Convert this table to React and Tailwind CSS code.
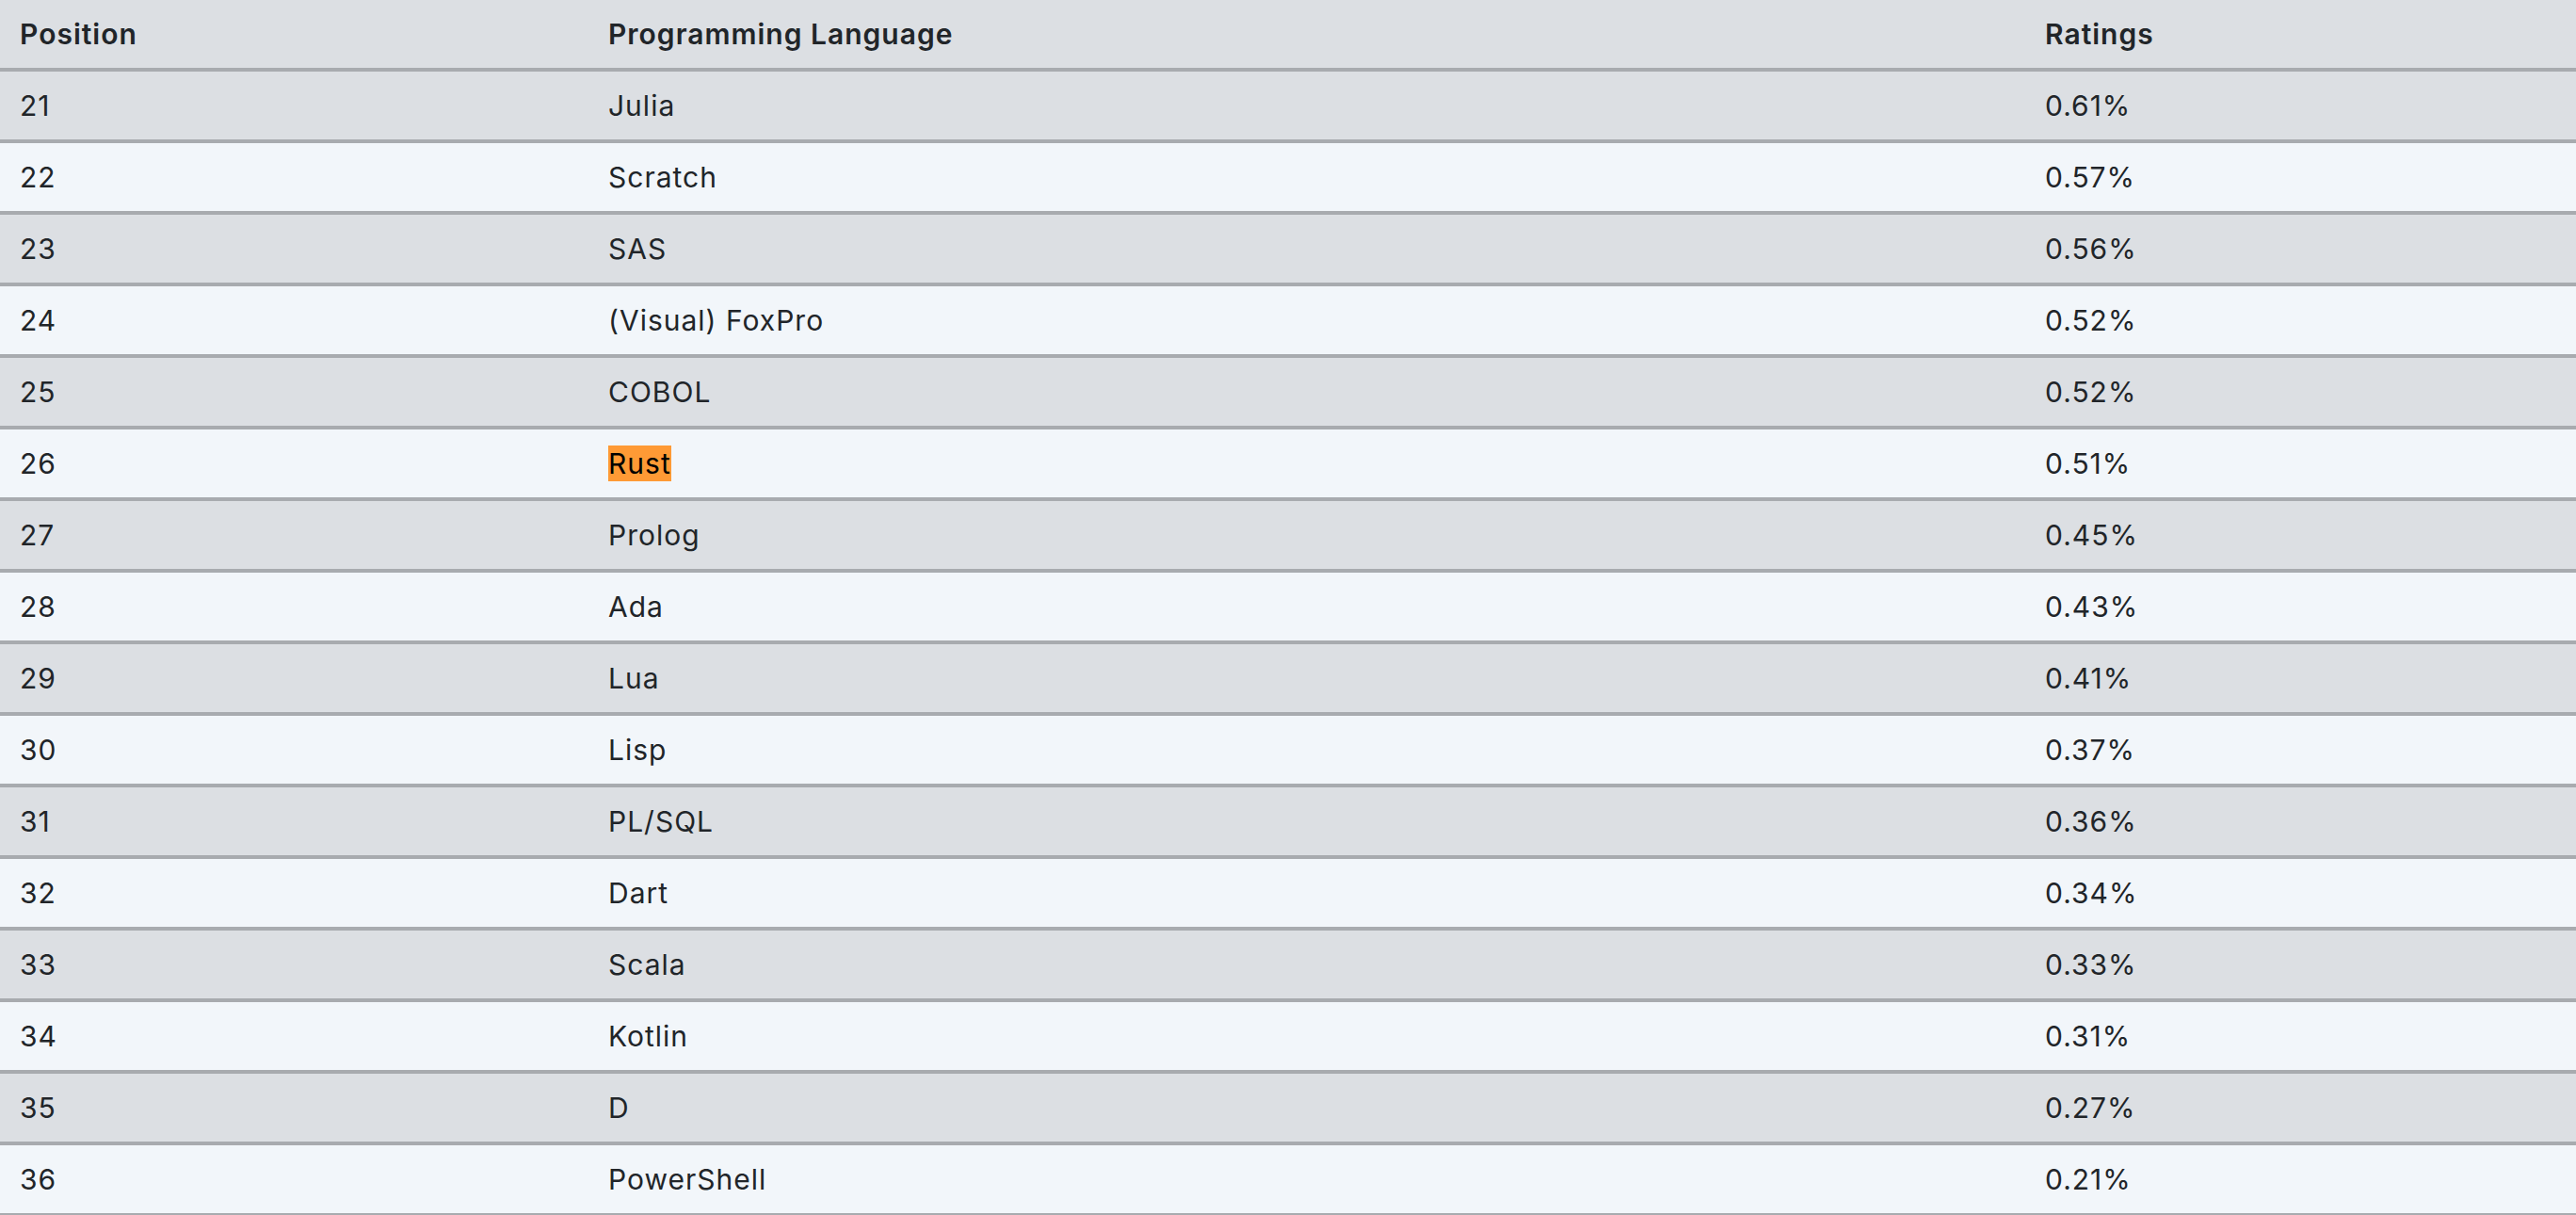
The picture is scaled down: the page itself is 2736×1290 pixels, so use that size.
const rows = [
  ["21", "Julia", "0.61%"],
  ["22", "Scratch", "0.57%"],
  ["23", "SAS", "0.56%"],
  ["24", "(Visual) FoxPro", "0.52%"],
  ["25", "COBOL", "0.52%"],
  ["26", "Rust", "0.51%"],
  ["27", "Prolog", "0.45%"],
  ["28", "Ada", "0.43%"],
  ["29", "Lua", "0.41%"],
  ["30", "Lisp", "0.37%"],
  ["31", "PL/SQL", "0.36%"],
  ["32", "Dart", "0.34%"],
  ["33", "Scala", "0.33%"],
  ["34", "Kotlin", "0.31%"],
  ["35", "D", "0.27%"],
  ["36", "PowerShell", "0.21%"],
];

const App = () => {
  return (
    <div
      className="w-[2736px] h-[1290px] overflow-hidden bg-[#f2f6fa] text-[#212529] text-[30px]"
      style={{ fontFamily: '"Inter", sans-serif' }}
    >
      {/* Header */}
      <div className="grid grid-cols-[625px_1526px_1fr] items-center h-[76px] bg-[#dcdfe3] border-b-4 border-[#a8abaf] font-semibold tracking-[1px]">
        <div className="px-[21px]">Position</div>
        <div className="px-[21px]">Programming Language</div>
        <div className="px-[21px]">Ratings</div>
      </div>

      {/* Rows */}
      {rows.map(([pos, lang, rating], i) => (
        <div
          key={pos}
          className={`grid grid-cols-[625px_1526px_1fr] items-center h-[76px] border-b-4 border-[#a8abaf] tracking-[1px] ${
            i % 2 === 0 ? "bg-[#dcdfe3]" : "bg-[#f2f6fa]"
          }`}
        >
          <div className="px-[21px]">{pos}</div>
          <div className="px-[21px]">
            {lang === "Rust" ? (
              <span className="inline-block h-[38px] leading-[38px] bg-[#ff9a35] text-black">Rust</span>
            ) : (
              lang
            )}
          </div>
          <div className="px-[21px]">{rating}</div>
        </div>
      ))}
    </div>
  );
};

export default App;
